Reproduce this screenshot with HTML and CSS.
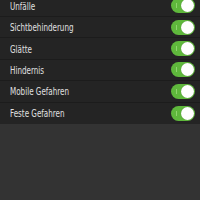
FILE: index.html
```html
<!DOCTYPE html>
<html>
<head>
<meta charset="utf-8">
<link rel="stylesheet" href="styles.css">
</head>
<body>
<ul class="list">
  <li class="row"><span class="label">Unfälle</span><span class="toggle"><span class="knob"></span></span></li>
  <li class="row"><span class="label">Sichtbehinderung</span><span class="toggle"><span class="knob"></span></span></li>
  <li class="row"><span class="label">Glätte</span><span class="toggle"><span class="knob"></span></span></li>
  <li class="row"><span class="label">Hindernis</span><span class="toggle"><span class="knob"></span></span></li>
  <li class="row"><span class="label">Mobile Gefahren</span><span class="toggle"><span class="knob"></span></span></li>
  <li class="row"><span class="label">Feste Gefahren</span><span class="toggle"><span class="knob"></span></span></li>
</ul>
</body>
</html>
```
FILE: styles.css
```css
html, body {
  margin: 0;
  padding: 0;
  background: #333333;
  width: 200px;
  height: 200px;
  overflow: hidden;
}
.list {
  list-style: none;
  margin: -4.4px 0 0 0;
  padding: 0;
  background: #242424;
}
.row {
  display: flex;
  align-items: center;
  justify-content: space-between;
  height: 20.4px;
  border-bottom: 1px solid #1c1c1c;
  padding: 0 5px 0 10px;
}
.row:last-child {
  border-bottom: none;
  height: 21.4px;
}
.label {
  font-family: "DejaVu Sans Condensed", "DejaVu Sans", sans-serif;
  font-size: 10.5px;
  color: #e0e0e0;
  display: inline-block;
  transform: scaleX(0.76);
  transform-origin: left center;
}
.toggle {
  position: relative;
  width: 24px;
  height: 15px;
  border-radius: 8px;
  background: #5fb83c;
  display: flex;
  align-items: center;
  justify-content: flex-end;
  padding-right: 1px;
  box-sizing: border-box;
}
.toggle::before {
  content: "";
  position: absolute;
  left: 5px;
  top: 5px;
  width: 1px;
  height: 5px;
  background: #8fd56e;
}
.knob {
  width: 13px;
  height: 13px;
  border-radius: 50%;
  background: #ffffff;
  box-shadow: 0 0 1px rgba(0,0,0,0.3);
}
```
